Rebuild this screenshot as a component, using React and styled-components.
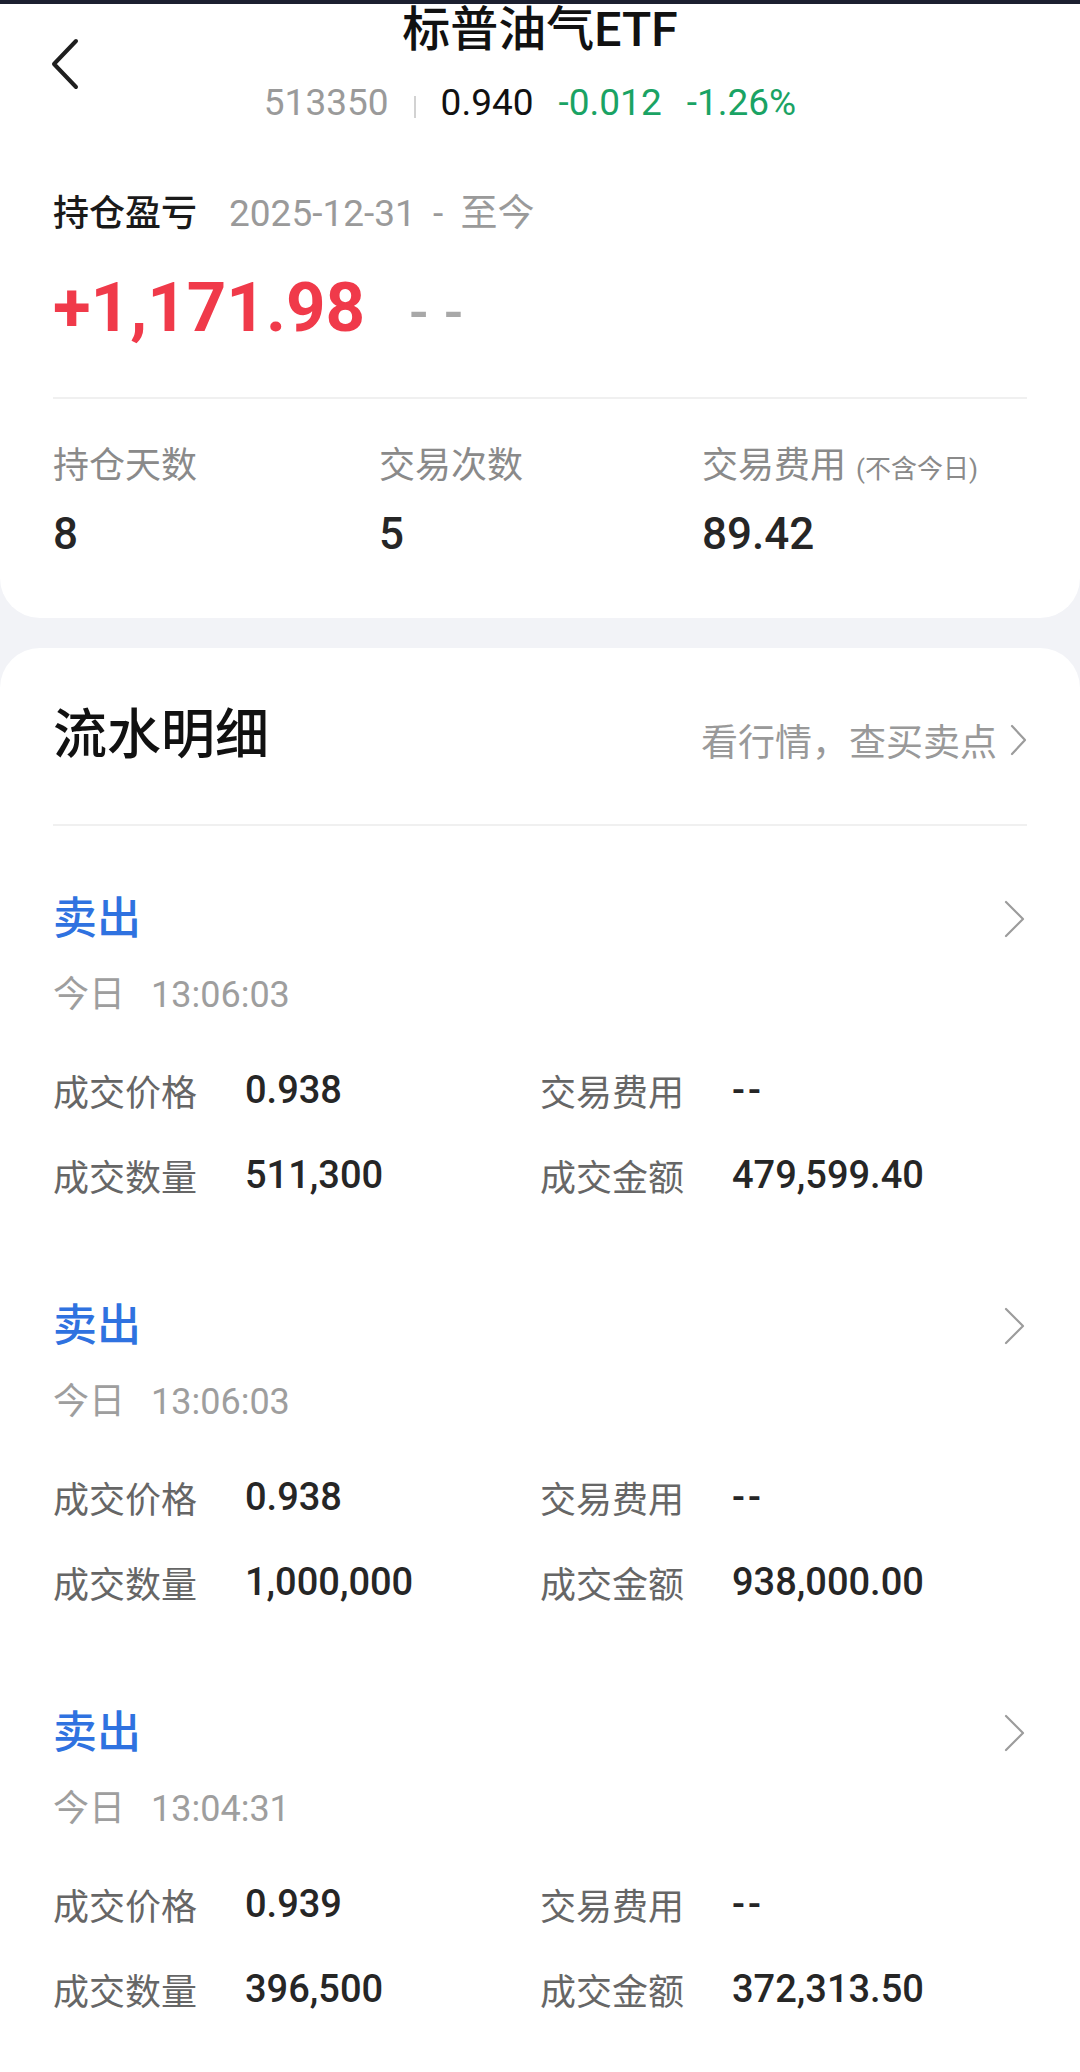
import React from "react";
import styled, { createGlobalStyle } from "styled-components";

const FONT = `"Roboto", "Noto Sans CJK SC", sans-serif`;

const trades = [
  { side: "卖出", time: "13:06:03", price: "0.938", fee: "--", qty: "511,300", amount: "479,599.40" },
  { side: "卖出", time: "13:06:03", price: "0.938", fee: "--", qty: "1,000,000", amount: "938,000.00" },
  { side: "卖出", time: "13:04:31", price: "0.939", fee: "--", qty: "396,500", amount: "372,313.50" },
];

const GlobalStyle = createGlobalStyle`
  html, body {
    margin: 0;
    padding: 0;
  }
  body {
    background: #f2f3f7;
    font-family: ${FONT};
    -webkit-font-smoothing: antialiased;
  }
`;

const Page = styled.div`
  width: 1080px;
  min-height: 2072px;
  background: #f2f3f7;
  display: flex;
  flex-direction: column;
`;

const StatusStrip = styled.div`
  height: 4px;
  background: #1c2030;
`;

const TopCard = styled.section`
  background: #fff;
  border-radius: 0 0 40px 40px;
  padding: 0 53px 56px;
`;

const Header = styled.header`
  display: grid;
  grid-template-columns: 1fr auto 1fr;
  align-items: start;
`;

const BackButton = styled.button`
  justify-self: start;
  margin: 33px 0 0 -3px;
  padding: 0;
  border: 0;
  background: none;
  width: 32px;
  height: 54px;
  display: flex;
`;

const TitleBlock = styled.div`
  display: flex;
  flex-direction: column;
  align-items: center;
`;

const Title = styled.h1`
  margin: 0;
  font-size: 48px;
  line-height: 52px;
  font-weight: 500;
  color: #111;
`;

const Quote = styled.div`
  display: flex;
  align-items: center;
  gap: 25px;
  margin: 24px 20px 0 0;
  height: 44px;
  font-size: 37px;
`;

const QuoteText = styled.span`
  color: ${(p) => p.$color};
`;

const QuoteDivider = styled.span`
  width: 2px;
  height: 22px;
  background: #d2d2d2;
  transform: translateY(5px);
`;

const PnlHead = styled.div`
  display: flex;
  align-items: center;
  margin-top: 61px;
  height: 50px;
  font-size: 36px;
`;

const PnlLabel = styled.span`
  color: #1a1a1a;
  font-weight: 500;
`;

const PnlRange = styled.span`
  color: #9a9a9a;
  margin-left: 32px;
  font-size: 37px;
  word-spacing: 8px;
`;

const PnlRow = styled.div`
  display: flex;
  align-items: baseline;
  margin-top: 33px;
  height: 80px;
`;

const PnlValue = styled.span`
  font-size: 69px;
  line-height: 80px;
  font-weight: 700;
  color: #f03a4a;
`;

const PnlRate = styled.span`
  font-size: 56px;
  line-height: 80px;
  font-weight: 500;
  color: #a8a8a8;
  margin-left: 44px;
  letter-spacing: 1px;
`;

const Rule = styled.div`
  height: 2px;
  background: #f0f0f0;
  margin-top: ${(p) => p.$top}px;
`;

const Stats = styled.div`
  display: grid;
  grid-template-columns: 326px 323px 1fr;
  margin-top: 42px;
`;

const Stat = styled.div`
  display: flex;
  flex-direction: column;
`;

const StatLabel = styled.div`
  display: flex;
  align-items: baseline;
  height: 50px;
  line-height: 50px;
  font-size: 36px;
  color: #8a8a8a;
`;

const StatNote = styled.span`
  font-size: 26px;
  margin-left: 10px;
`;

const StatValue = styled.div`
  margin-top: 15px;
  height: 56px;
  line-height: 56px;
  font-size: 44px;
  font-weight: 500;
  color: #262626;
`;

const LedgerCard = styled.section`
  flex: 1;
  margin-top: 30px;
  background: #fff;
  border-radius: 40px 40px 0 0;
  padding: 50px 53px 0;
`;

const LedgerHead = styled.div`
  display: flex;
  align-items: center;
  justify-content: space-between;
  height: 76px;
`;

const LedgerTitle = styled.h2`
  margin: 0;
  font-size: 54px;
  line-height: 76px;
  font-weight: 500;
  color: #111;
`;

const MarketLink = styled.a`
  display: flex;
  align-items: center;
  gap: 12px;
  margin: 8px -2px 0 0;
  font-size: 37px;
  color: #999;
  text-decoration: none;
`;

const TradeList = styled.div`
  display: flex;
  flex-direction: column;
  gap: 96px;
  padding-top: 63px;
`;

const Trade = styled.article`
  display: flex;
  flex-direction: column;
`;

const TradeHead = styled.div`
  display: flex;
  align-items: center;
  justify-content: space-between;
  height: 60px;
`;

const TradeSide = styled.span`
  font-size: 44px;
  line-height: 60px;
  font-weight: 500;
  color: #2f72e0;
`;

const TradeTime = styled.div`
  margin-top: 21px;
  height: 50px;
  line-height: 50px;
  font-size: 36px;
  color: #9e9e9e;
`;

const TimeValue = styled.span`
  margin-left: 26px;
`;

const Fields = styled.div`
  display: grid;
  grid-template-columns: 1fr 1fr;
  row-gap: 35px;
  margin-top: 45px;
`;

const Field = styled.div`
  display: flex;
  align-items: center;
  height: 50px;
`;

const FieldLabel = styled.span`
  font-size: 36px;
  color: #666;
`;

const FieldValue = styled.span`
  margin-left: 48px;
  font-size: 38px;
  font-weight: 500;
  color: #262626;
  letter-spacing: ${(p) => (p.$dash ? "3px" : "0")};
`;

const BackIcon = () => (
  <svg width="32" height="54" viewBox="0 0 32 54" fill="none">
    <path d="M26 4 L4 27 L26 50" stroke="#1f1f1f" strokeWidth="4" strokeLinecap="round" strokeLinejoin="round" />
  </svg>
);

const ChevronRight = ({ w, h }) => (
  <svg width={w} height={h} viewBox={`0 0 ${w} ${h}`} fill="none">
    <path
      d={`M3 3 L${w - 4} ${h / 2} L3 ${h - 3}`}
      stroke="#9c9c9c"
      strokeWidth="2.2"
      strokeLinecap="round"
      strokeLinejoin="round"
    />
  </svg>
);

const TradeCard = ({ trade }) => (
  <Trade>
    <TradeHead>
      <TradeSide>{trade.side}</TradeSide>
      <ChevronRight w={24} h={40} />
    </TradeHead>
    <TradeTime>
      今日<TimeValue>{trade.time}</TimeValue>
    </TradeTime>
    <Fields>
      <Field>
        <FieldLabel>成交价格</FieldLabel>
        <FieldValue>{trade.price}</FieldValue>
      </Field>
      <Field>
        <FieldLabel>交易费用</FieldLabel>
        <FieldValue $dash>{trade.fee}</FieldValue>
      </Field>
      <Field>
        <FieldLabel>成交数量</FieldLabel>
        <FieldValue>{trade.qty}</FieldValue>
      </Field>
      <Field>
        <FieldLabel>成交金额</FieldLabel>
        <FieldValue>{trade.amount}</FieldValue>
      </Field>
    </Fields>
  </Trade>
);

const App = () => {
  return (
    <Page>
      <GlobalStyle />
      <StatusStrip />
      <TopCard>
        <Header>
          <BackButton aria-label="返回">
            <BackIcon />
          </BackButton>
          <TitleBlock>
            <Title>标普油气ETF</Title>
            <Quote>
              <QuoteText $color="#9a9a9a">513350</QuoteText>
              <QuoteDivider />
              <QuoteText $color="#111">0.940</QuoteText>
              <QuoteText $color="#1aa364">-0.012</QuoteText>
              <QuoteText $color="#1aa364">-1.26%</QuoteText>
            </Quote>
          </TitleBlock>
          <div />
        </Header>

        <PnlHead>
          <PnlLabel>持仓盈亏</PnlLabel>
          <PnlRange>2025-12-31 - 至今</PnlRange>
        </PnlHead>
        <PnlRow>
          <PnlValue>+1,171.98</PnlValue>
          <PnlRate>- -</PnlRate>
        </PnlRow>

        <Rule $top={49} />

        <Stats>
          <Stat>
            <StatLabel>持仓天数</StatLabel>
            <StatValue>8</StatValue>
          </Stat>
          <Stat>
            <StatLabel>交易次数</StatLabel>
            <StatValue>5</StatValue>
          </Stat>
          <Stat>
            <StatLabel>
              交易费用<StatNote>(不含今日)</StatNote>
            </StatLabel>
            <StatValue>89.42</StatValue>
          </Stat>
        </Stats>
      </TopCard>

      <LedgerCard>
        <LedgerHead>
          <LedgerTitle>流水明细</LedgerTitle>
          <MarketLink>
            看行情，查买卖点
            <ChevronRight w={20} h={34} />
          </MarketLink>
        </LedgerHead>
        <Rule $top={50} />
        <TradeList>
          {trades.map((t, i) => (
            <TradeCard key={i} trade={t} />
          ))}
        </TradeList>
      </LedgerCard>
    </Page>
  );
};

export default App;
